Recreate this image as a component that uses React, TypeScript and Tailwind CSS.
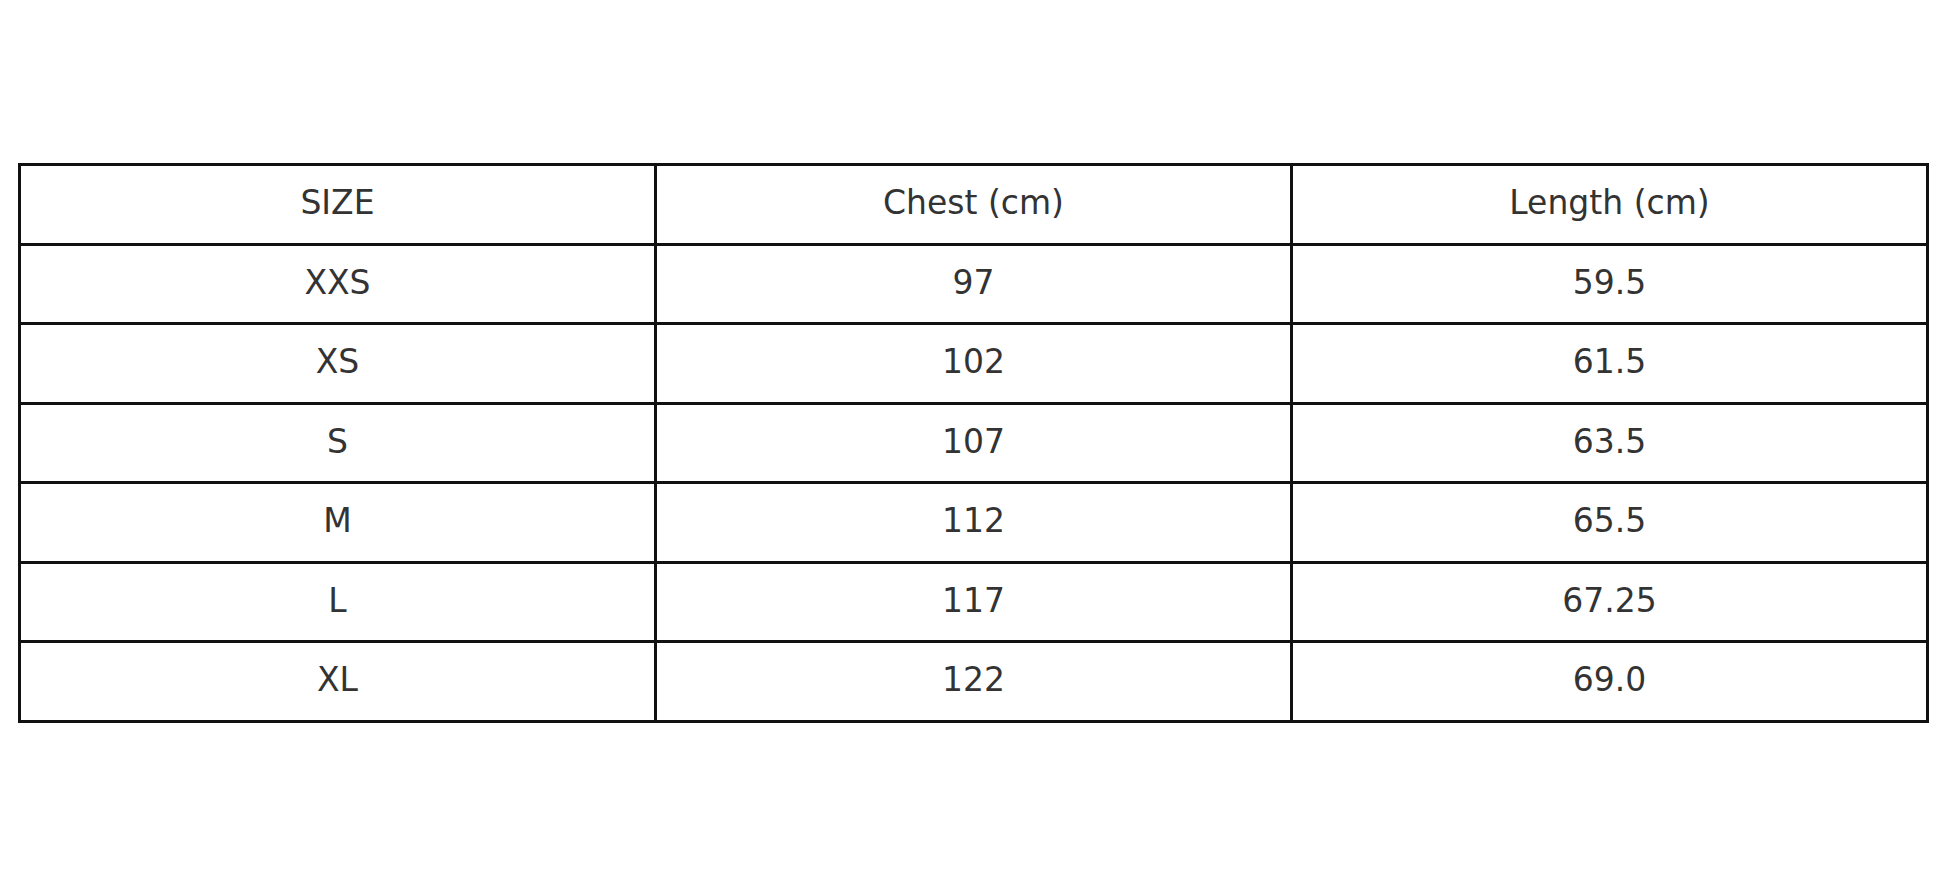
import React from 'react';

const rows = [
  ['XXS', '97', '59.5'],
  ['XS', '102', '61.5'],
  ['S', '107', '63.5'],
  ['M', '112', '65.5'],
  ['L', '117', '67.25'],
  ['XL', '122', '69.0'],
];

const App: React.FC = () => {
  return (
    <div className="w-[1946px] h-[884px] bg-white pt-[163px] pl-[18px] font-['DejaVu_Sans',sans-serif] text-[#333333]">
      <table className="w-[1911px] border-collapse table-fixed text-[33px]">
        <thead>
          <tr>
            {['SIZE', 'Chest (cm)', 'Length (cm)'].map((h) => (
              <th key={h} className="h-[79.5px] pb-[3px] border-[3px] border-[#111111] font-normal text-center">
                {h}
              </th>
            ))}
          </tr>
        </thead>
        <tbody>
          {rows.map((r) => (
            <tr key={r[0]}>
              {r.map((c, i) => (
                <td key={i} className="h-[79.5px] pb-[3px] border-[3px] border-[#111111] text-center">
                  {c}
                </td>
              ))}
            </tr>
          ))}
        </tbody>
      </table>
    </div>
  );
};

export default App;
